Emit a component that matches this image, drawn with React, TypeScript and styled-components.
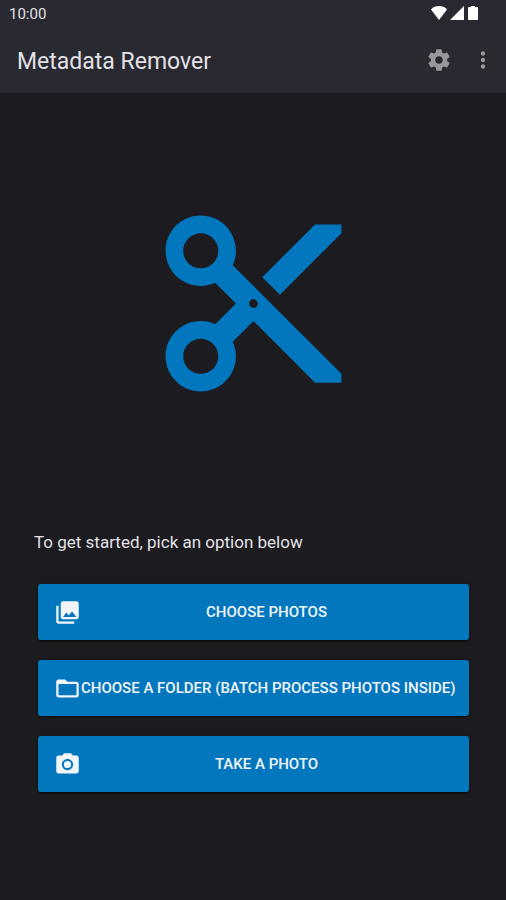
import React from "react";
import styled, { createGlobalStyle } from "styled-components";

const GlobalStyle = createGlobalStyle`
  * { box-sizing: border-box; }
  body {
    margin: 0;
    background: #1c1b1f;
    color: #e2e1e5;
    font-family: Roboto, "Liberation Sans", sans-serif;
  }
`;

const Screen = styled.div`
  min-height: 100vh;
  display: flex;
  flex-direction: column;
`;

const Header = styled.header`
  background: #292932;
`;

const StatusBar = styled.div`
  display: flex;
  align-items: center;
  justify-content: space-between;
  height: 28px;
  padding: 0 27px 0 9px;
  font-size: 15px;
  line-height: 28px;
`;

const StatusIcons = styled.div`
  display: flex;
  align-items: center;
  gap: 3px;
  padding-bottom: 2px;
  color: #ffffff;
`;

const Toolbar = styled.div`
  display: flex;
  align-items: center;
  gap: 5px;
  height: 65px;
  padding: 0 8px 0 17px;
`;

const Title = styled.h1`
  flex: 1;
  margin: 0;
  padding-top: 2px;
  font-size: 23px;
  font-weight: 400;
  line-height: 32px;
`;

const IconButton = styled.button<{ $width: number }>`
  display: flex;
  align-items: center;
  justify-content: center;
  width: ${(p) => p.$width}px;
  height: 44px;
  padding: 0 0 2px;
  border: 0;
  background: none;
  color: #98979d;
  cursor: pointer;
`;

const Content = styled.main`
  flex: 1;
  display: flex;
  flex-direction: column;
  padding: 0 34px 108px;
`;

const Hero = styled.div`
  flex: 1;
  display: flex;
  align-items: center;
  justify-content: center;
  padding: 16px 0;
  color: #0277bd;
`;

const Prompt = styled.p`
  margin: 16px 0 30px;
  font-size: 17px;
  line-height: 24px;
`;

const Actions = styled.div`
  display: flex;
  flex-direction: column;
  gap: 20px;
  padding: 0 3px 0 4px;
`;

const ActionButton = styled.button`
  display: flex;
  align-items: center;
  min-height: 56px;
  padding: 0 17px 0 16px;
  border: 0;
  border-radius: 3px;
  background: #0277bd;
  box-shadow: 0 1px 3px rgba(0, 0, 0, 0.7);
  color: #f1f5fa;
  font-family: inherit;
  font-size: 15px;
  font-weight: 500;
  line-height: 20px;
  text-transform: uppercase;
  cursor: pointer;
`;

const ActionLabel = styled.span`
  flex: 1;
  min-width: 0;
  text-align: center;
  white-space: nowrap;

  @media (max-width: 495px) {
    white-space: normal;
  }
`;

const Glyph = styled.svg`
  display: block;
  flex: none;
  fill: currentColor;
`;

const paths = {
  scissors:
    "M9.64 7.64c.23-.5.36-1.05.36-1.64 0-2.21-1.79-4-4-4S2 3.79 2 6s1.79 4 4 4c.59 0 1.14-.13 1.64-.36L10 12l-2.36 2.36C7.14 14.13 6.59 14 6 14c-2.21 0-4 1.79-4 4s1.79 4 4 4 4-1.79 4-4c0-.59-.13-1.14-.36-1.64L12 14l7 7h3v-1L9.64 7.64zM6 8c-1.1 0-2-.89-2-2s.9-2 2-2 2 .89 2 2-.9 2-2 2zm0 12c-1.1 0-2-.89-2-2s.9-2 2-2 2 .89 2 2-.9 2-2 2zm6-7.5c-.28 0-.5-.22-.5-.5s.22-.5.5-.5.5.22.5.5-.22.5-.5.5zM19 3l-6 6 2 2 7-7V3z",
  settings:
    "M19.43 12.98c.04-.32.07-.64.07-.98s-.03-.66-.07-.98l2.11-1.65c.19-.15.24-.42.12-.64l-2-3.46c-.12-.22-.39-.3-.61-.22l-2.49 1c-.52-.4-1.08-.73-1.69-.98l-.38-2.65C14.46 2.18 14.25 2 14 2h-4c-.25 0-.46.18-.49.42l-.38 2.65c-.61.25-1.17.59-1.69.98l-2.49-1c-.23-.09-.49 0-.61.22l-2 3.46c-.13.22-.07.49.12.64l2.11 1.65c-.04.32-.07.65-.07.98s.03.66.07.98l-2.11 1.65c-.19.15-.24.42-.12.64l2 3.46c.12.22.39.3.61.22l2.49-1c.52.4 1.08.73 1.69.98l.38 2.65c.03.24.24.42.49.42h4c.25 0 .46-.18.49-.42l.38-2.65c.61-.25 1.17-.59 1.69-.98l2.49 1c.23.09.49 0 .61-.22l2-3.46c.12-.22.07-.49-.12-.64l-2.11-1.65zM12 15.5c-1.93 0-3.5-1.57-3.5-3.5s1.57-3.5 3.5-3.5 3.5 1.57 3.5 3.5-1.57 3.5-3.5 3.5z",
  more: "M12 8c1.1 0 2-.9 2-2s-.9-2-2-2-2 .9-2 2 .9 2 2 2zm0 2c-1.1 0-2 .9-2 2s.9 2 2 2 2-.9 2-2-.9-2-2-2zm0 6c-1.1 0-2 .9-2 2s.9 2 2 2 2-.9 2-2-.9-2-2-2z",
  photos:
    "M22 16V4c0-1.1-.9-2-2-2H8c-1.1 0-2 .9-2 2v12c0 1.1.9 2 2 2h12c1.1 0 2-.9 2-2zm-11-4l2.03 2.71L16 11l4 5H8l3-4zM2 6v14c0 1.1.9 2 2 2h14v-2H4V6H2z",
  folder:
    "M20 6h-8l-2-2H4c-1.1 0-1.99.9-1.99 2L2 18c0 1.1.9 2 2 2h16c1.1 0 2-.9 2-2V8c0-1.1-.9-2-2-2zm0 12H4V8h16v10z",
  camera:
    "M9 2L7.17 4H4c-1.1 0-2 .9-2 2v12c0 1.1.9 2 2 2h16c1.1 0 2-.9 2-2V6c0-1.1-.9-2-2-2h-3.17L15 2H9zm3 15c-2.76 0-5-2.24-5-5s2.24-5 5-5 5 2.24 5 5-2.24 5-5 5zm0-1.8a3.2 3.2 0 1 0 0-6.4 3.2 3.2 0 0 0 0 6.4z",
};

function Icon({ name, size }: { name: keyof typeof paths; size: number }) {
  return (
    <Glyph viewBox="0 0 24 24" width={size} height={size} aria-hidden="true">
      <path d={paths[name]} />
    </Glyph>
  );
}

const actions: { icon: keyof typeof paths; label: string }[] = [
  { icon: "photos", label: "Choose photos" },
  { icon: "folder", label: "Choose a folder (batch process photos inside)" },
  { icon: "camera", label: "Take a photo" },
];

export default function App() {
  return (
    <Screen>
      <GlobalStyle />
      <Header>
        <StatusBar>
          <span>10:00</span>
          <StatusIcons>
            <Glyph viewBox="0 0 16 14" width={16} height={14} aria-hidden="true">
              <path d="M0 3.4C2 1 5 0 8 0s6 1 8 3.4L8 14z" />
            </Glyph>
            <Glyph viewBox="0 0 14 14" width={14} height={14} aria-hidden="true">
              <path d="M0 14L14 0v14z" />
            </Glyph>
            <Glyph viewBox="0 0 12 14" width={12} height={14} aria-hidden="true">
              <path d="M4 0h4v1h2q1 0 1 1v11q0 1-1 1H2q-1 0-1-1V2q0-1 1-1h2z" />
            </Glyph>
          </StatusIcons>
        </StatusBar>
        <Toolbar>
          <Title>Metadata Remover</Title>
          <IconButton $width={48} type="button" aria-label="Settings">
            <Icon name="settings" size={26} />
          </IconButton>
          <IconButton $width={30} type="button" aria-label="More options">
            <Icon name="more" size={26} />
          </IconButton>
        </Toolbar>
      </Header>
      <Content>
        <Hero>
          <Icon name="scissors" size={211} />
        </Hero>
        <Prompt>To get started, pick an option below</Prompt>
        <Actions>
          {actions.map((action) => (
            <ActionButton key={action.label} type="button">
              <Icon name={action.icon} size={27} />
              <ActionLabel>{action.label}</ActionLabel>
            </ActionButton>
          ))}
        </Actions>
      </Content>
    </Screen>
  );
}
